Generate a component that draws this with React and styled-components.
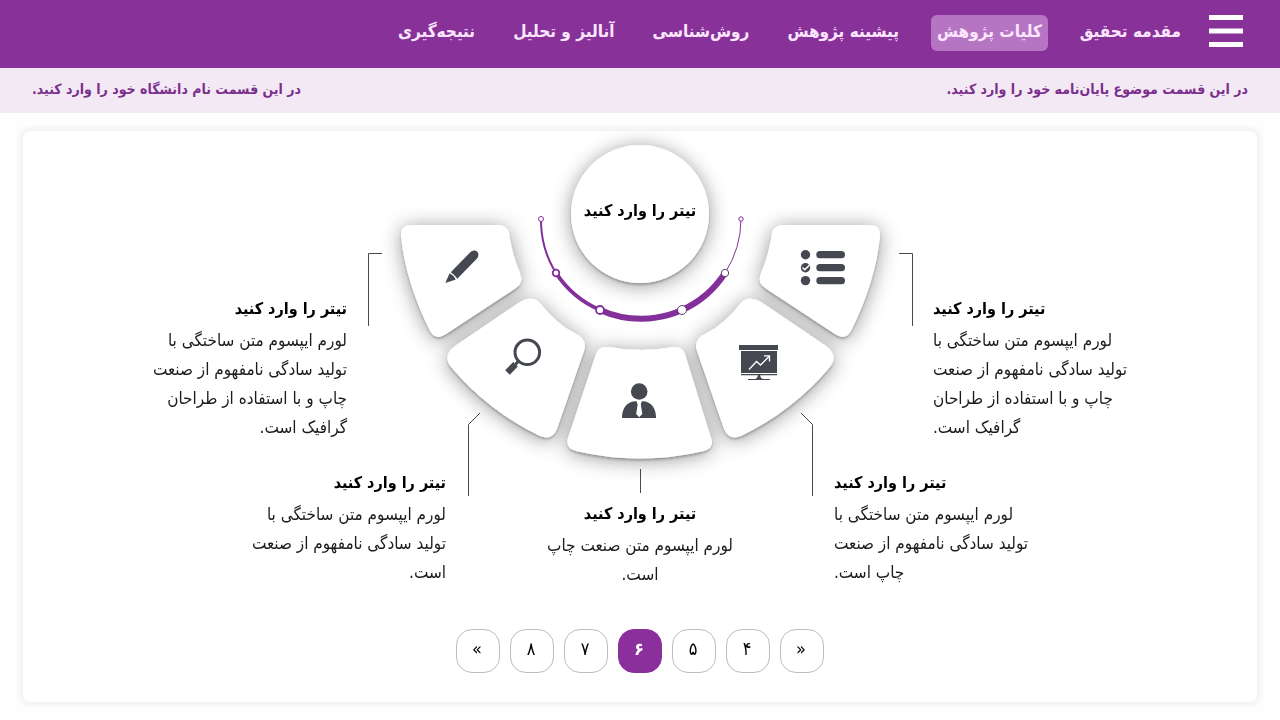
import styled, { createGlobalStyle } from 'styled-components';

const GlobalStyle = createGlobalStyle`
  * {
    box-sizing: border-box;
  }
  body {
    margin: 0;
    background-color: #fefefe;
    font-family: 'DejaVu Sans Condensed', 'DejaVu Sans', sans-serif;
    color: #000;
  }
`;

const Page = styled.div`
  min-height: 100vh;
  display: flex;
  flex-direction: column;
`;

const Header = styled.header`
  display: flex;
  align-items: flex-start;
  gap: 22px;
  height: 68px;
  padding: 15px 37px 0;
  background-color: #883199;
`;

const MenuButton = styled.button`
  padding: 0;
  border: 0;
  background: none;
  cursor: pointer;
  svg {
    display: block;
  }
`;

const Nav = styled.nav`
  display: flex;
  gap: 26px;
`;

const NavLink = styled.a`
  height: 36px;
  padding: 0 6px;
  border-radius: 6px;
  background-color: ${(props) => (props.$active ? '#b675c3' : 'transparent')};
  color: #fce6ff;
  font-size: 17px;
  font-weight: 700;
  line-height: 32px;
  text-decoration: none;
  white-space: nowrap;
`;

const SubBar = styled.div`
  display: flex;
  justify-content: space-between;
  height: 45px;
  padding: 0 32px;
  background-color: #f3e9f5;
  color: #7b2f8c;
  font-size: 14px;
  font-weight: 700;
  line-height: 42px;
`;

const Card = styled.main`
  flex: 1;
  display: flex;
  flex-direction: column;
  align-items: center;
  justify-content: space-between;
  margin: 18px 23px;
  padding-bottom: 29px;
  border-radius: 8px;
  background-color: #fff;
  box-shadow: 0 0 4px 4px #f3f3f3;
`;

// 모든 자식을 같은 셀에 겹쳐 놓음
const Stage = styled.section`
  display: grid;
  justify-items: center;
  align-items: start;
  > * {
    grid-area: 1 / 1;
  }
`;

const DialBox = styled.div`
  display: grid;
  justify-items: center;
  > * {
    grid-area: 1 / 1;
  }
  svg {
    display: block;
  }
`;

const Title = styled.h2`
  margin: 0 0 1px;
  font-size: 16px;
  font-weight: 700;
  line-height: 32px;
  white-space: nowrap;
`;

const DialTitle = styled(Title)`
  margin-top: 64px;
`;

const Row = styled.div`
  display: grid;
  grid-template-columns: 200px ${(props) => props.$gap}px 200px;
  padding-top: ${(props) => props.$top}px;
`;

const Callout = styled.article`
  grid-column: ${(props) => props.$col};
  text-align: ${(props) => props.$align};
`;

const MiddleCallout = styled(Callout)`
  padding-top: 31px;
`;

const Text = styled.p`
  margin: 0;
  color: #1c1c1c;
  font-size: 17px;
  line-height: 29px;
  white-space: pre;
`;

const Pager = styled.nav`
  display: flex;
  gap: 10px;
`;

const PageButton = styled.button`
  width: 44px;
  height: 44px;
  padding: 0 2px 6px 0;
  border: 1px solid ${(props) => (props.$active ? '#8b2f9c' : '#bdbdbd')};
  border-radius: 16px;
  background-color: ${(props) => (props.$active ? '#8b2f9c' : '#fff')};
  color: ${(props) => (props.$active ? '#fff' : '#000')};
  font-family: inherit;
  font-size: 18px;
  font-weight: ${(props) => (props.$active ? 700 : 400)};
  cursor: pointer;
`;

const links = [
  'مقدمه تحقیق',
  'کلیات پژوهش',
  'پیشینه پژوهش',
  'روش‌شناسی',
  'آنالیز و تحلیل',
  'نتیجه‌گیری',
];

const pages = ['«', '۴', '۵', '۶', '۷', '۸', '»'];

const title = 'تیتر را وارد کنید';

const longText = `لورم ایپسوم متن ساختگی با
تولید سادگی نامفهوم از صنعت
چاپ و با استفاده از طراحان
گرافیک است.`;

const petals = [
  'M412 225H497Q507 225 509 233Q512 254 520 273Q524 283 516 288L446 334Q436 341 430 331Q406 283 401 237Q400 225 412 225Z',
  'M520 302Q532 295 540 303Q556 324 576 334Q588 340 584 351L557 429Q552 441 540 436Q488 411 451 367Q442 356 455 346Z',
];

function Petals() {
  return petals.map((d) => <path key={d} d={d} />);
}

function Dial() {
  return (
    <svg width="560" height="370" viewBox="360 131 560 370" aria-hidden="true">
      <defs>
        <filter id="soft" x="-20%" y="-20%" width="140%" height="140%">
          <feDropShadow dx="0" dy="2" stdDeviation="1" floodColor="#000" floodOpacity="0.24" />
          <feDropShadow dx="0" dy="2" stdDeviation="10" floodColor="#000" floodOpacity="0.4" />
        </filter>
      </defs>

      <g filter="url(#soft)" fill="#fff">
        <Petals />
        <g transform="translate(1281 0) scale(-1 1)">
          <Petals />
        </g>
        <path d="M608 347Q640 353 673 347Q682 346 685 354L711 438Q715 448 704 451Q640 466 576 451Q565 448 568 438L596 354Q599 346 608 347Z" />
        <circle cx="640" cy="214" r="69" />
      </g>

      {/* arc */}
      <g fill="none" stroke="#83309a">
        <path d="M541 219A100 100 0 0 0 556 273" strokeWidth="2" />
        <path d="M556 273A100 100 0 0 0 600 310" strokeWidth="4" />
        <path d="M600 310A100 100 0 0 0 682 310" strokeWidth="6" />
        <path d="M682 310A100 100 0 0 0 725 273" strokeWidth="6" />
        <path d="M725 273A100 100 0 0 0 741 219" strokeWidth="1" />
      </g>
      <g fill="#fff" stroke="#83309a">
        <circle cx="541" cy="219" r="2.5" />
        <circle cx="556" cy="273" r="3.3" strokeWidth="1.8" />
        <circle cx="600" cy="310" r="4" strokeWidth="1.8" />
        <circle cx="682" cy="310" r="4.5" stroke="#5d3a68" />
        <circle cx="725" cy="273" r="3.7" stroke="#5d3a68" />
        <circle cx="741" cy="219" r="2.2" />
      </g>

      {/* connectors */}
      <g fill="none" stroke="#4a4a4a">
        <path d="M382 253.5H368.5V326" />
        <path d="M899 253.5H912.5V326" />
        <path d="M480 413L468.5 424.5V496" />
        <path d="M801 413L812.5 424.5V496" />
        <path d="M640.5 469V493" />
      </g>

      <g fill="#454850">
        {/* pencil */}
        <path d="M450.8 272.2L470.5 252C476 247.5 481 253.5 477 258.5L457.3 278.8Q454.5 274.5 450.8 272.2Z" />
        <path d="M449.6 273.3Q454 275.5 455.8 279.5L445.3 283Z" />

        {/* magnifier */}
        <circle cx="527.3" cy="352.3" r="12.3" fill="none" stroke="#454850" strokeWidth="3" />
        <path d="M518.5 361L515.5 364.5" stroke="#454850" strokeWidth="3" />
        <path d="M515.5 364.3L507.5 372.5" stroke="#454850" strokeWidth="6.5" />

        {/* person */}
        <circle cx="639.2" cy="391.5" r="8.3" />
        <path d="M622 418C622 409 626 402 635 401.3H643.5C652 402 656 409 656 418Z" />
        <path d="M636.5 401H641.8L640.8 404.5L642.3 414L639.2 417.3L636.2 414L637.6 404.5Z" fill="#fff" />

        {/* list */}
        <circle cx="805.5" cy="254.7" r="4.7" />
        <circle cx="805.5" cy="267.7" r="4.7" />
        <circle cx="805.5" cy="280.6" r="4.7" />
        <rect x="816.3" y="251" width="28.7" height="7.3" rx="3.6" />
        <rect x="816.3" y="264" width="28.7" height="7.3" rx="3.6" />
        <rect x="816.3" y="277" width="28.7" height="7.3" rx="3.6" />
        <path d="M802.5 267.5L804.8 269.8L809.3 265.3" fill="none" stroke="#fff" strokeWidth="1.5" />

        {/* board */}
        <path d="M739 345H778V350H739ZM741 351H777V373H741ZM741 374H777V375.3H741ZM758 375H760L761 378L763 379H770V380H748V379H755L757 378Z" />
        <path d="M749 369.5L756.5 361.5L760.5 365L769 356.5M764 355.8H769.5V361.5" fill="none" stroke="#fff" strokeWidth="1.3" />
      </g>
    </svg>
  );
}

function App() {
  return (
    <Page dir="rtl" lang="fa">
      <GlobalStyle />
      <Header>
        <MenuButton aria-label="منو">
          <svg width="34" height="32" viewBox="0 0 34 32" fill="#fff">
            <path d="M0 0H34V5H0ZM0 13.5H34V18.5H0ZM0 27H34V32H0Z" />
          </svg>
        </MenuButton>
        <Nav>
          {links.map((link, i) => (
            <NavLink key={link} href="#" $active={i === 1}>
              {link}
            </NavLink>
          ))}
        </Nav>
      </Header>
      <SubBar>
        <span>در این قسمت موضوع پایان‌نامه خود را وارد کنید.</span>
        <span>در این قسمت نام دانشگاه خود را وارد کنید.</span>
      </SubBar>

      <Card>
        <Stage>
          <DialBox>
            <Dial />
            <DialTitle as="h1">{title}</DialTitle>
          </DialBox>
          <Row $gap={586} $top={162}>
            <Callout $col={1} $align="left">
              <Title>{title}</Title>
              <Text>{longText}</Text>
            </Callout>
            <Callout $col={3} $align="right">
              <Title>{title}</Title>
              <Text>{longText}</Text>
            </Callout>
          </Row>
          <Row $gap={388} $top={336}>
            <Callout $col={1} $align="left">
              <Title>{title}</Title>
              <Text>{'لورم ایپسوم متن ساختگی با\nتولید سادگی نامفهوم از صنعت\nچاپ است.'}</Text>
            </Callout>
            <MiddleCallout $col={2} $align="center">
              <Title>{title}</Title>
              <Text>{'لورم ایپسوم متن صنعت چاپ\nاست.'}</Text>
            </MiddleCallout>
            <Callout $col={3} $align="right">
              <Title>{title}</Title>
              <Text>{'لورم ایپسوم متن ساختگی با\nتولید سادگی نامفهوم از صنعت\nاست.'}</Text>
            </Callout>
          </Row>
        </Stage>
        <Pager aria-label="صفحه‌ها">
          {pages.map((page) => (
            <PageButton key={page} $active={page === '۶'}>
              {page}
            </PageButton>
          ))}
        </Pager>
      </Card>
    </Page>
  );
}

export default App;
